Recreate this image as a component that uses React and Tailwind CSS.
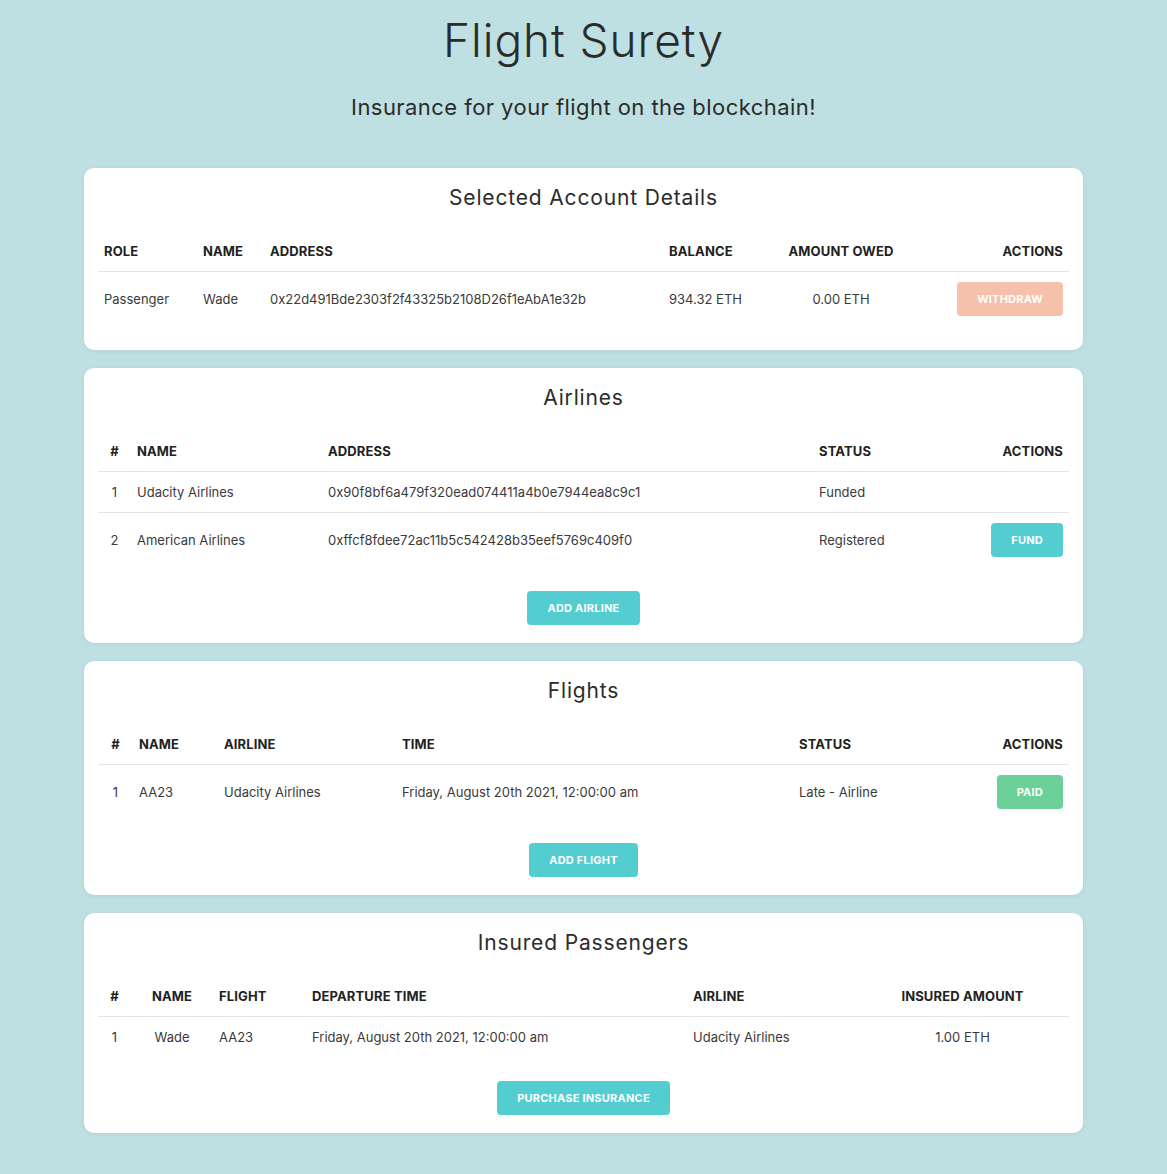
const font = { fontFamily: "Inter, 'Open Sans', sans-serif" };

const accountCols = [
	{ label: "Role", w: "w-[99px]", align: "text-left" },
	{ label: "Name", w: "w-[67px]", align: "text-left" },
	{ label: "Address", w: "w-[399px]", align: "text-left" },
	{ label: "Balance", w: "w-[107px]", align: "text-left" },
	{ label: "Amount Owed", w: "w-[142px]", align: "text-center" },
	{ label: "Actions", w: "w-auto", align: "text-right" },
];

const airlineCols = [
	{ label: "#", w: "w-[33px]", align: "text-center" },
	{ label: "Name", w: "w-[191px]", align: "text-left" },
	{ label: "Address", w: "w-[491px]", align: "text-left" },
	{ label: "Status", w: "w-[137px]", align: "text-left" },
	{ label: "Actions", w: "w-auto", align: "text-right" },
];

const flightCols = [
	{ label: "#", w: "w-[35px]", align: "text-center" },
	{ label: "Name", w: "w-[85px]", align: "text-left" },
	{ label: "Airline", w: "w-[178px]", align: "text-left" },
	{ label: "Time", w: "w-[397px]", align: "text-left" },
	{ label: "Status", w: "w-[157px]", align: "text-left" },
	{ label: "Actions", w: "w-auto", align: "text-right" },
];

const insuredCols = [
	{ label: "#", w: "w-[33px]", align: "text-center" },
	{ label: "Name", w: "w-[82px]", align: "text-center" },
	{ label: "Flight", w: "w-[93px]", align: "text-left" },
	{ label: "Departure Time", w: "w-[381px]", align: "text-left" },
	{ label: "Airline", w: "w-[169px]", align: "text-left" },
	{ label: "Insured Amount", w: "w-auto", align: "text-center" },
];

const airlines = [
	{
		id: 1,
		name: "Udacity Airlines",
		address: "0x90f8bf6a479f320ead074411a4b0e7944ea8c9c1",
		status: "Funded",
	},
	{
		id: 2,
		name: "American Airlines",
		address: "0xffcf8fdee72ac11b5c542428b35eef5769c409f0",
		status: "Registered",
	},
];

const Button = ({ children, color = "bg-[#53cdd0]", className = "" }) => (
	<button
		type="button"
		className={`${color} ${className} block h-[34px] rounded-[4px] px-5 text-[11px] font-bold uppercase tracking-[0.02em] text-white`}
	>
		{children}
	</button>
);

const Card = ({ title, cols, children, footer }) => (
	<section
		className={`rounded-[10px] bg-white px-[14px] pt-[14px] shadow-[0_1px_4px_rgba(0,0,0,0.08)] ${footer ? "pb-[18px]" : "pb-6"}`}
	>
		<h2 className="text-center text-[21px] leading-[32px] font-normal tracking-[0.04em] text-[#2b2b2b]">
			{title}
		</h2>
		<table className="mt-[17px] w-full table-fixed border-collapse text-[13px] text-[#3a3a3a]">
			<thead>
				<tr className="border-b border-[#e2e3e6]">
					{cols.map((col) => (
						<th
							key={col.label}
							className={`${col.w} ${col.align} px-[6px] py-[10px] text-[13px] leading-5 font-bold uppercase tracking-[0.01em] text-[#222]`}
						>
							{col.label}
						</th>
					))}
				</tr>
			</thead>
			<tbody>{children}</tbody>
		</table>
		{footer ?
			<div className="mt-6 flex justify-center">{footer}</div>
		:	null}
	</section>
);

const td = "px-[6px] py-[10px] leading-5";

const App = () => {
	return (
		<div className="min-h-[1174px] bg-[#bfe0e3] pb-10" style={font}>
			<header className="pt-3 text-center text-[#2b2b2b]">
				<h1 className="text-[46px] leading-[56px] font-light tracking-[0.02em]">
					Flight Surety
				</h1>
				<p className="mt-6 text-[22px] leading-[30px] tracking-[0.02em]">
					Insurance for your flight on the blockchain!
				</p>
			</header>

			<main className="mx-auto mt-[46px] flex max-w-[999px] flex-col gap-[18px]">
				<Card title="Selected Account Details" cols={accountCols}>
					<tr>
						<td className={td}>Passenger</td>
						<td className={td}>Wade</td>
						<td className={td}>0x22d491Bde2303f2f43325b2108D26f1eAbA1e32b</td>
						<td className={td}>934.32 ETH</td>
						<td className={`${td} text-center`}>0.00 ETH</td>
						<td className={td}>
							<Button color="bg-[#f6c1ab]" className="ml-auto">
								Withdraw
							</Button>
						</td>
					</tr>
				</Card>

				<Card
					title="Airlines"
					cols={airlineCols}
					footer={<Button>Add Airline</Button>}
				>
					{airlines.map((airline) => (
						<tr key={airline.id} className="border-t border-[#e2e3e6] first:border-t-0">
							<td className={`${td} text-center`}>{airline.id}</td>
							<td className={td}>{airline.name}</td>
							<td className={td}>{airline.address}</td>
							<td className={td}>{airline.status}</td>
							<td className={td}>
								{airline.status === "Registered" ?
									<Button className="ml-auto">Fund</Button>
								:	null}
							</td>
						</tr>
					))}
				</Card>

				<Card title="Flights" cols={flightCols} footer={<Button>Add Flight</Button>}>
					<tr>
						<td className={`${td} text-center`}>1</td>
						<td className={td}>AA23</td>
						<td className={td}>Udacity Airlines</td>
						<td className={td}>Friday, August 20th 2021, 12:00:00 am</td>
						<td className={td}>Late - Airline</td>
						<td className={td}>
							<Button color="bg-[#6bd198]" className="ml-auto">
								Paid
							</Button>
						</td>
					</tr>
				</Card>

				<Card
					title="Insured Passengers"
					cols={insuredCols}
					footer={<Button>Purchase Insurance</Button>}
				>
					<tr>
						<td className={`${td} text-center`}>1</td>
						<td className={`${td} text-center`}>Wade</td>
						<td className={td}>AA23</td>
						<td className={td}>Friday, August 20th 2021, 12:00:00 am</td>
						<td className={td}>Udacity Airlines</td>
						<td className={`${td} text-center`}>1.00 ETH</td>
					</tr>
				</Card>
			</main>
		</div>
	);
};

export default App;
